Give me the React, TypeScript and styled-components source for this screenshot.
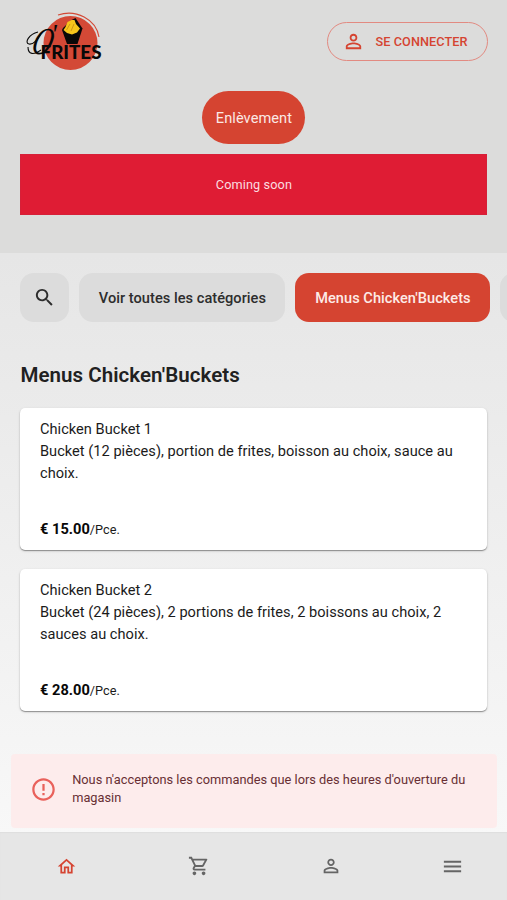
import React from "react";
import styled, { createGlobalStyle } from "styled-components";

const GlobalStyle = createGlobalStyle`
  *, *::before, *::after { box-sizing: border-box; }
  body { margin: 0; font-family: Roboto, "Liberation Sans", sans-serif; color: #212121; }
  button { font: inherit; border: 0; padding: 0; }
  h2, h3, p { margin: 0; font: inherit; }
`;

const accent = "#d54431";

const Page = styled.div`
  display: flex;
  flex-direction: column;
  height: 900px;
  overflow: hidden;
  background: linear-gradient(#dedede, #fafafa);
`;

const Hero = styled.header`
  display: flex;
  flex-direction: column;
  align-items: center;
  height: 253px;
  padding: 10px 19.5px 0 20.4px;
  background: #dcdcdb;
`;

const TopBar = styled.div`
  display: flex;
  justify-content: space-between;
  align-items: center;
  width: 100%;
  height: 62px;
`;

const LoginButton = styled.button`
  display: flex;
  align-items: center;
  gap: 11px;
  width: 161px;
  height: 39px;
  padding-left: 14px;
  border: 1px solid #e28a81;
  border-radius: 20px;
  background: transparent;
  color: ${accent};
  font-size: 12.7px;
  font-weight: 500;
  letter-spacing: 0.08px;
`;

const ModeButton = styled.button`
  width: 103px;
  height: 53px;
  margin-top: 19px;
  border-radius: 27px;
  background: ${accent};
  color: #fbe9e5;
  font-size: 14.6px;
  letter-spacing: 0.05px;
`;

const Banner = styled.div`
  display: grid;
  place-items: center;
  width: 467px;
  height: 61px;
  margin-top: 10px;
  background: #df1c34;
  box-shadow: inset 0 0 0 1px #d62038;
  color: #fbdde0;
  font-size: 12.7px;
  letter-spacing: 0.12px;
`;

const Categories = styled.nav`
  display: flex;
  gap: 10px;
  padding: 20.4px 0 0 20.4px;
  overflow: hidden;
  flex: none;
`;

const Chip = styled.button<{ $width: number; $active?: boolean }>`
  display: grid;
  place-items: center;
  flex: none;
  width: ${(p) => p.$width}px;
  height: 48.6px;
  border-radius: 14px;
  background: ${(p) => (p.$active ? accent : "#dcdcdc")};
  color: ${(p) => (p.$active ? "#fdebe7" : "#2d2d2d")};
  font-size: 14.6px;
  font-weight: 500;
  letter-spacing: 0.03px;
  white-space: nowrap;
`;

const Products = styled.main`
  display: flex;
  flex-direction: column;
  padding: 39px 19.6px 0 20.4px;
`;

const SectionTitle = styled.h2`
  height: 47px;
  font-size: 20.5px;
  font-weight: 600;
  line-height: 28px;
  letter-spacing: 0.06px;
`;

const Card = styled.article`
  display: flex;
  flex-direction: column;
  justify-content: space-between;
  height: 142px;
  margin-bottom: 19px;
  padding: 10px 20px 9px 19.6px;
  border-radius: 5px;
  background: #fff;
  box-shadow: 0 1px 1px rgba(0, 0, 0, 0.35), 0 1px 3px rgba(0, 0, 0, 0.14);
  color: #1b1b1b;
  font-size: 14.6px;
  line-height: 22px;
  letter-spacing: 0.02px;
`;

const Price = styled.p`
  font-size: 12.7px;
  letter-spacing: 0.02px;
  strong {
    font-size: 14.6px;
    color: #080808;
  }
`;

const Alert = styled.aside`
  display: flex;
  align-items: center;
  gap: 15px;
  flex: none;
  height: 73.5px;
  margin: auto 10px 4.5px 11.2px;
  padding: 0 19px;
  border-radius: 4px;
  background: #fdecec;
  color: #682f34;
  font-size: 12.8px;
  line-height: 18.4px;
`;

const AlertIcon = styled.span`
  display: flex;
  flex: none;
  margin: 0 0.5px 2px -0.5px;
  color: #e9615b;
`;

const AlertText = styled.p`
  padding-bottom: 3px;
`;

const BottomBar = styled.nav`
  display: grid;
  grid-template-columns: 133px 131px 133px 110px;
  align-items: center;
  flex: none;
  height: 68px;
  background: #e6e6e6;
  box-shadow: inset 0 1px 1px #dedede;
`;

const Tab = styled.button<{ $active?: boolean }>`
  display: flex;
  justify-content: center;
  background: transparent;
  color: ${(p) => (p.$active ? accent : "#656565")};
`;

const iconPaths = {
  person:
    "M12 5.9c1.16 0 2.1.94 2.1 2.1s-.94 2.1-2.1 2.1S9.9 9.16 9.9 8s.94-2.1 2.1-2.1m0 9c2.97 0 6.1 1.46 6.1 2.1v1.1H5.9V17c0-.64 3.13-2.1 6.1-2.1M12 4C9.79 4 8 5.79 8 8s1.79 4 4 4 4-1.79 4-4-1.79-4-4-4zm0 9c-2.67 0-8 1.34-8 4v3h16v-3c0-2.66-5.33-4-8-4z",
  search:
    "M15.5 14h-.79l-.28-.27C15.41 12.59 16 11.11 16 9.5 16 5.91 13.09 3 9.5 3S3 5.91 3 9.5 5.91 16 9.5 16c1.61 0 3.09-.59 4.23-1.57l.27.28v.79l5 4.99L20.49 19l-4.99-5zm-6 0C7.01 14 5 11.99 5 9.5S7.01 5 9.5 5 14 7.01 14 9.5 11.99 14 9.5 14z",
  error:
    "M11 15h2v2h-2v-2zm0-8h2v6h-2V7zm.99-5C6.47 2 2 6.48 2 12s4.47 10 9.99 10C17.52 22 22 17.52 22 12S17.52 2 11.99 2zM12 20c-4.42 0-8-3.58-8-8s3.58-8 8-8 8 3.58 8 8-3.58 8-8 8z",
  home: "M12 5.69l5 4.5V18h-2v-6H9v6H7v-7.81l5-4.5M12 3L2 12h3v8h6v-6h2v6h6v-8h3L12 3z",
  cart:
    "M15.55 13c.75 0 1.41-.41 1.75-1.03l3.58-6.49A.996.996 0 0 0 20.01 4H5.21l-.94-2H1v2h2l3.6 7.59-1.35 2.44C4.52 15.37 5.48 17 7 17h12v-2H7l1.1-2h7.45zM6.16 6h12.15l-2.76 5H8.53L6.16 6zM7 18c-1.1 0-1.99.9-1.99 2S5.9 22 7 22s2-.9 2-2-.9-2-2-2zm10 0c-1.1 0-1.99.9-1.99 2s.89 2 1.99 2 2-.9 2-2-.9-2-2-2z",
  menu: "M3 18h18v-2H3v2zm0-5h18v-2H3v2zm0-7v2h18V6H3z",
};

function Icon({ name, size }: { name: keyof typeof iconPaths; size: number }) {
  return (
    <svg width={size} height={size} viewBox="0 0 24 24" fill="currentColor" aria-hidden="true">
      <path d={iconPaths[name]} />
    </svg>
  );
}

function Logo() {
  return (
    <svg width="90" height="62" viewBox="0 0 90 62" role="img" aria-label="O'Frites">
      <circle cx="50.5" cy="33" r="27" fill="#d34936" />
      <path d="M38 5C56-1 76 9 79 27" fill="none" stroke="#d34936" strokeWidth="1.1" />
      <path d="M42 20l5 14h10.500l5-15.500-7-10.500-4 2-8.500 8z" fill="#080808" />
      <path d="M43.500 20l2-3 2-5 4-2 3 0 1.500 4 4 4.500-3 4-5 2-5-1.500z" fill="#f6c51c" />
      <path d="M46.500 20l3.500-6M51 21l3-7" stroke="#c58b12" strokeWidth=".8" />
      <text transform="translate(10 43.500) skewX(-14) scale(.74 1)" fontFamily="Liberation Serif, serif" fontStyle="italic" fontSize="38" fill="#080808">O</text>
      <path d="M18 22C9 24 4 33 9 34s9-5 12-10M8 37c0 8 6 8 13 3" fill="none" stroke="#080808" strokeWidth="1.1" />
      <text x="31" y="33" fontFamily="Liberation Serif, serif" fontStyle="italic" fontSize="27" fill="#080808">'</text>
      <text x="20.500" y="48.800" textLength="61" lengthAdjust="spacingAndGlyphs" fontFamily="Lato, sans-serif" fontWeight="900" fontSize="18.5" fill="#080808">FRITES</text>
    </svg>
  );
}

const products = [
  { name: "Chicken Bucket 1", text: "Bucket (12 pièces), portion de frites, boisson au choix, sauce au choix.", price: "€ 15.00" },
  { name: "Chicken Bucket 2", text: "Bucket (24 pièces), 2 portions de frites, 2 boissons au choix, 2 sauces au choix.", price: "€ 28.00" },
];

export default function App() {
  return (
    <Page>
      <GlobalStyle />
      <Hero>
        <TopBar>
          <Logo />
          <LoginButton>
            <Icon name="person" size={23} />
            SE CONNECTER
          </LoginButton>
        </TopBar>
        <ModeButton>Enlèvement</ModeButton>
        <Banner>Coming soon</Banner>
      </Hero>
      <Categories>
        <Chip $width={49} aria-label="Rechercher">
          <Icon name="search" size={23} />
        </Chip>
        <Chip $width={206}>Voir toutes les catégories</Chip>
        <Chip $width={195} $active>Menus Chicken'Buckets</Chip>
        <Chip $width={120} />
      </Categories>
      <Products>
        <SectionTitle>Menus Chicken'Buckets</SectionTitle>
        {products.map((item) => (
          <Card key={item.name}>
            <div>
              <h3>{item.name}</h3>
              <p>{item.text}</p>
            </div>
            <Price>
              <strong>{item.price}</strong>/Pce.
            </Price>
          </Card>
        ))}
      </Products>
      <Alert>
        <AlertIcon><Icon name="error" size={27} /></AlertIcon>
        <AlertText>Nous n'acceptons les commandes que lors des heures d'ouverture du magasin</AlertText>
      </Alert>
      <BottomBar>
        <Tab $active aria-label="Accueil"><Icon name="home" size={21} /></Tab>
        <Tab aria-label="Panier"><Icon name="cart" size={22} /></Tab>
        <Tab aria-label="Compte"><Icon name="person" size={22} /></Tab>
        <Tab aria-label="Menu"><Icon name="menu" size={23} /></Tab>
      </BottomBar>
    </Page>
  );
}
